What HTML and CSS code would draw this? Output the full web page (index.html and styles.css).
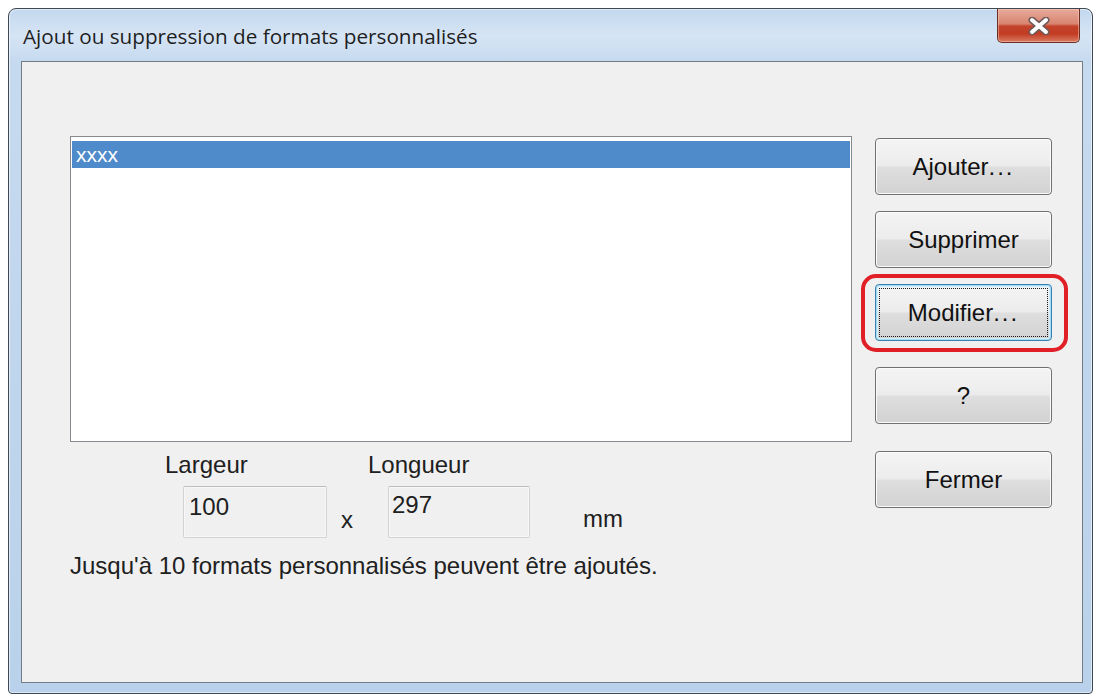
FILE: index.html
```
<html>
	<head>
		<title>Ajout ou suppression de formats personnalisés</title>
		<link rel="stylesheet" href="styles.css">
	</head>
	<body>
		<div class="window">
			<div class="titlebar">
				<span class="title">Ajout ou suppression de formats personnalisés</span>
				<button class="close">
					<svg width="22" height="18" viewBox="0 0 22 18">
						<path d="M4 3 L18 15 M18 3 L4 15" stroke="#6e5a58" stroke-width="7" stroke-linecap="round"/>
						<path d="M4 3 L18 15 M18 3 L4 15" stroke="#ffffff" stroke-width="4" stroke-linecap="round"/>
					</svg>
				</button>
			</div>
			<div class="client">
				<div class="main">
					<div class="left">
						<div class="listbox">
							<div class="item selected">xxxx</div>
						</div>
						<div class="size-labels">
							<span class="lbl-width">Largeur</span>
							<span>Longueur</span>
						</div>
						<div class="size-row">
							<div class="field">100</div>
							<span class="times">x</span>
							<div class="field field-len">297</div>
							<span class="unit">mm</span>
						</div>
					</div>
					<div class="buttons">
						<button class="btn">Ajouter<span class="dots">...</span></button>
						<button class="btn">Supprimer</button>
						<div class="callout">
							<button class="btn default"><span class="focus">Modifier<span class="dots">...</span></span></button>
						</div>
						<button class="btn help">?</button>
						<button class="btn close-btn">Fermer</button>
					</div>
				</div>
				<p class="note">Jusqu'à 10 formats personnalisés peuvent être ajoutés.</p>
			</div>
		</div>
	</body>
</html>
```

FILE: styles.css
```
body
{
	margin: 8px;
	background-color: #ffffff;
	font-family: "Liberation Sans", Arial, sans-serif;
}

/* window frame */
.window
{
	border: 1px solid #3f4852;
	border-radius: 8px 8px 4px 4px;
	padding: 0 9px 10px 12px;
	box-sizing: content-box;
	width: 1062px;
	height: 674px;
	display: flex;
	flex-direction: column;
	background: linear-gradient(180deg, #c2d7ee 0px, #d6e5f5 26px, #c6daef 52px, #b9d1ea 100%);
	box-shadow: inset 0 0 0 1px rgba(255, 255, 255, 0.55);
}

.titlebar
{
	height: 52px;
	display: flex;
	justify-content: space-between;
	align-items: flex-start;
}

.title
{
	margin: 13px 0 0 2px;
	font-family: "Open Sans", sans-serif;
	font-size: 20.7px;
	line-height: 28px;
	color: #1e1e1e;
}

.close
{
	width: 83px;
	height: 34px;
	margin-right: 3px;
	padding: 0;
	border: 1px solid #6a3028;
	border-top: 0;
	border-radius: 0 0 5px 5px;
	display: flex;
	align-items: center;
	justify-content: center;
	background: linear-gradient(180deg, #e7ab9c 0%, #d88470 45%, #c4432b 52%, #c23b23 75%, #d97c62 100%);
	box-shadow: inset 0 0 0 1px rgba(255, 210, 190, 0.45);
}

/* client area */
.client
{
	border: 1px solid #737b84;
	background-color: #f0f0f0;
	padding: 74px 0 0 48px;
	box-sizing: border-box;
	height: 622px;
}

.main
{
	display: flex;
	gap: 23px;
}

.left
{
	width: 782px;
}

.listbox
{
	height: 306px;
	box-sizing: border-box;
	border: 1px solid #868a8f;
	background-color: #ffffff;
	padding: 4px 1px;
}

.item
{
	height: 27px;
	line-height: 27px;
	padding-left: 4px;
	font-size: 21px;
}

.selected
{
	background-color: #4f8acb;
	color: #ffffff;
}

.size-labels
{
	margin-top: 9px;
	padding-left: 95px;
	display: flex;
	font-size: 24px;
	line-height: 27px;
	color: #202020;
}

.lbl-width
{
	width: 203px;
}

.size-row
{
	margin-top: 8px;
	padding-left: 113px;
	display: flex;
	align-items: flex-end;
	font-size: 24px;
	line-height: 27px;
	color: #202020;
}

.field
{
	width: 144px;
	height: 52px;
	box-sizing: border-box;
	border: 1px solid #d3d3d3;
	border-top-color: #bdbdbd;
	border-radius: 2px;
	padding: 6px 0 0 5px;
	background-color: #f0f0f0;
	box-shadow: inset 0 0 0 1px #f7f7f7;
}

.field-len
{
	width: 142px;
	padding: 4px 0 0 3px;
}

.times
{
	width: 61px;
	padding: 0 0 5px 14px;
	box-sizing: border-box;
}

.unit
{
	margin-left: 53px;
	padding-bottom: 6px;
}

/* command buttons */
.buttons
{
	width: 177px;
	margin-top: 2px;
	display: flex;
	flex-direction: column;
	gap: 16px;
}

.btn
{
	width: 177px;
	height: 57px;
	padding: 0;
	border: 1px solid #707070;
	border-radius: 4px;
	font-family: "Liberation Sans", Arial, sans-serif;
	font-size: 24px;
	color: #111111;
	background: linear-gradient(180deg, #f4f4f4 0%, #ececec 48%, #dedede 52%, #d2d2d2 100%);
	box-shadow: inset 0 0 0 1px #fbfbfb;
}

.dots
{
	letter-spacing: 2px;
}

.default
{
	border-color: #3c7fb1;
	box-shadow: inset 0 0 0 1px #9fdcf6, inset 0 0 0 2px #d4eefa;
	padding: 3px;
}

.focus
{
	display: flex;
	align-items: center;
	justify-content: center;
	height: 100%;
	border: 1px dotted #1b1b1b;
	box-sizing: border-box;
}

/* red ring drawn round the highlighted button */
.callout
{
	margin: -10px -16px -11px -14px;
	padding: 6px 12px 7px 10px;
	border: 4px solid #e11f27;
	border-radius: 15px;
}

.help
{
	margin-top: 10px;
}

.close-btn
{
	margin-top: 11px;
}

.note
{
	margin: 14px 0 0 0;
	font-size: 24px;
	line-height: 27px;
	color: #202020;
}
```
